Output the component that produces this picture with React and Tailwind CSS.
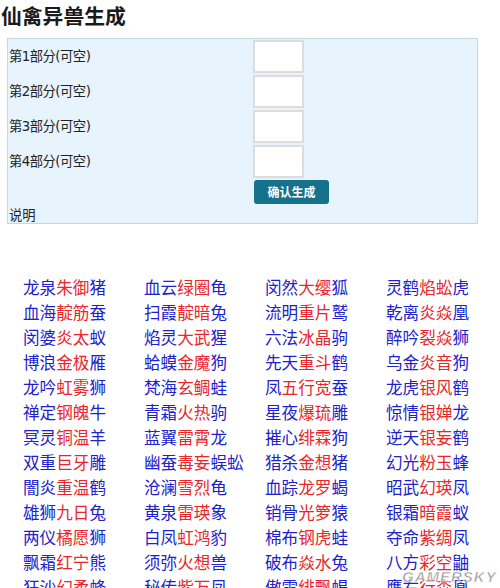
import React from "react";

const cols = [
  [
    ["龙泉", "朱御", "猪"],
    ["血海", "靛筋", "蚕"],
    ["闵婆", "炎太", "蚁"],
    ["博浪", "金极", "雁"],
    ["龙吟", "虹雾", "狮"],
    ["禅定", "钢魄", "牛"],
    ["冥灵", "铜温", "羊"],
    ["双重", "巨牙", "雕"],
    ["闇炎", "重温", "鹤"],
    ["雄狮", "九日", "兔"],
    ["两仪", "橘愿", "狮"],
    ["飘霜", "红宁", "熊"],
    ["狂沙", "幻柔", "蜂"],
  ],
  [
    ["血云", "绿圈", "龟"],
    ["扫霞", "靛暗", "兔"],
    ["焰灵", "大武", "猩"],
    ["蛤蟆", "金魔", "狗"],
    ["梵海", "玄鲷", "蛙"],
    ["青霜", "火热", "驹"],
    ["蓝翼", "雷霄", "龙"],
    ["幽蚕", "毒妄", "蜈蚣"],
    ["沧澜", "雪烈", "龟"],
    ["黄泉", "雷瑛", "象"],
    ["白凤", "虹鸿", "豹"],
    ["须弥", "火想", "兽"],
    ["秘传", "紫万", "凤"],
  ],
  [
    ["闵然", "大缨", "狐"],
    ["流明", "重片", "鹫"],
    ["六法", "冰晶", "驹"],
    ["先天", "重斗", "鹤"],
    ["凤", "五行宽", "蚕"],
    ["星夜", "爆琉", "雕"],
    ["摧心", "绯霖", "狗"],
    ["猎杀", "金想", "猪"],
    ["血踪", "龙罗", "蝎"],
    ["销骨", "光箩", "猿"],
    ["棉布", "钢虎", "蛙"],
    ["破布", "焱水", "兔"],
    ["傲雪", "绯飘", "蝎"],
  ],
  [
    ["灵鹤", "焰蚣", "虎"],
    ["乾离", "炎焱", "凰"],
    ["醉吟", "裂焱", "狮"],
    ["乌金", "炎音", "狗"],
    ["龙虎", "银风", "鹤"],
    ["惊情", "银婵", "龙"],
    ["逆天", "银妄", "鹤"],
    ["幻光", "粉玉", "蜂"],
    ["昭武", "幻瑛", "凤"],
    ["银霜", "暗霞", "蚁"],
    ["夺命", "紫绸", "凤"],
    ["八方", "彩空", "鼬"],
    ["鹰右", "行森", "凰"],
  ],
];

const rows = [];
for (let r = 0; r < 13; r++) {
  for (let c = 0; c < 4; c++) rows.push(cols[c][r]);
}

const font = { fontFamily: '"Noto Sans CJK SC", "Noto Sans", sans-serif' };

function FieldRow({ n }) {
  return (
    <div className="flex items-center h-[33px] mb-[2px]">
      <div className="w-[245px] pl-[1px] text-[13.3px] text-[#222] leading-[33px]" style={{ fontFamily: '"DejaVu Sans", "Noto Sans CJK SC", sans-serif', letterSpacing: "-0.5px" }}>
        第{n}部分(可空)
      </div>
      <div className="w-[51px] h-[33px] bg-white border-2 border-[#dcdcdc]" />
    </div>
  );
}

export default function App() {
  return (
    <div className="relative w-[500px] h-[588px] overflow-hidden bg-white" style={font}>
      <h1 className="pl-[1px] text-[20.8px] font-bold leading-[30px] text-[#1a1a1a]">仙禽异兽生成</h1>
      <div className="ml-[7px] mt-[8px] w-[471px] h-[186px] border border-[#c6d7e4] bg-[#e7f3fd] pt-[1px]">
        <FieldRow n={1} />
        <FieldRow n={2} />
        <FieldRow n={3} />
        <FieldRow n={4} />
        <div className="flex">
          <div className="w-[246px]" />
          <button className="w-[75px] h-[24px] rounded-[3px] bg-[#16718b] text-white text-[12px] font-bold leading-[24px]">
            确认生成
          </button>
        </div>
        <div className="pt-[3px] pl-[1px] text-[13.3px] leading-[16px] text-[#222]">说明</div>
      </div>
      <div className="mt-[51px] pl-[23px] grid grid-cols-[121px_121px_121px_121px] text-[16.6px] leading-[25px]">
        {rows.map((r, i) => (
          <div key={i} className="whitespace-nowrap">
            <span className="text-[#2121cc]">{r[0]}</span>
            <span className="text-[#e8262b]">{r[1]}</span>
            <span className="text-[#2121cc]">{r[2]}</span>
          </div>
        ))}
      </div>
      <div
        className="absolute left-[402px] top-[566px] text-[15px] font-bold italic tracking-[1px] text-[#8f8f8f]/90"
        style={{ fontFamily: '"Liberation Sans", sans-serif', WebkitTextStroke: "0.5px #ffffff" }}
      >
        GAMERSKY
      </div>
    </div>
  );
}
